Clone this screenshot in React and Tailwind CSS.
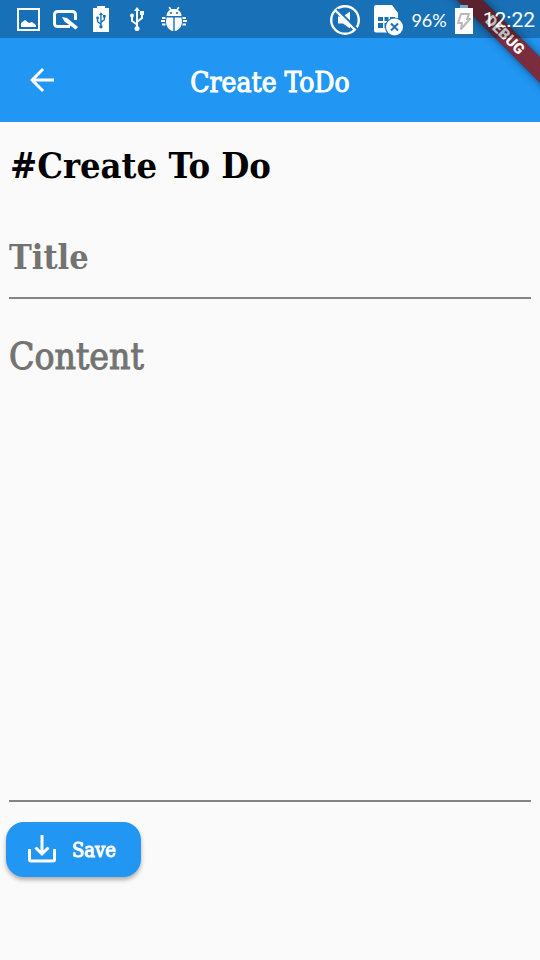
import React from 'react';

const slab = "font-['DejaVu_Serif_Condensed','DejaVu_Serif',serif]";

function PictureIcon() {
  return (
    <svg className="h-6 w-6" viewBox="0 0 24 24" fill="none" aria-hidden="true">
      <rect x="2" y="2" width="21" height="21" stroke="#fff" strokeWidth="2" />
      <path d="M5 20v-4l4-3 4 3 3-1 4 3v2z" fill="#fff" />
    </svg>
  );
}

function PenTabletIcon() {
  return (
    <svg className="h-6 w-7" viewBox="0 0 28 24" fill="none" aria-hidden="true">
      <path d="M23.500 13V7.500a3 3 0 0 0-3-3h-15a3 3 0 0 0-3 3v9a3 3 0 0 0 3 3H18" stroke="#fff" strokeWidth="3" />
      <path d="M10 10l5 1 11 9-2.500 2.500-11-8z" fill="#fff" />
    </svg>
  );
}

function UsbShape({ color }) {
  return (
    <g stroke={color} fill={color}>
      <path d="M8 4v17M8 18.500L3 15V9M8 16l5-4V7" fill="none" strokeWidth="2" />
      <path d="M5 5l3-4 3 4z" stroke="none" />
      <circle cx="8" cy="22.500" r="2.500" stroke="none" />
      <circle cx="3" cy="9.500" r="2" stroke="none" />
      <rect x="11" y="5" width="4" height="4" stroke="none" />
    </g>
  );
}

function UsbIcon() {
  return (
    <svg className="h-[26px] w-4" viewBox="0 0 16 26" aria-hidden="true">
      <UsbShape color="#fff" />
    </svg>
  );
}

function UsbBatteryIcon() {
  return (
    <svg className="h-[26px] w-4" viewBox="0 0 16 26" aria-hidden="true">
      <path d="M4 0h8v2h4v24H0V2h4z" fill="#fff" />
      <g transform="translate(2.5 5.5) scale(.68)">
        <UsbShape color="#1970b6" />
      </g>
    </svg>
  );
}

function BugIcon() {
  return (
    <svg className="h-[26px] w-[26px]" viewBox="0 0 26 26" fill="#fff" aria-hidden="true">
      <path d="M5.500 10c0-3 1.500-5 3.500-6L7.500 1.500 9 .8l1.500 2.500c1.500-.4 3.500-.4 5 0L17 .8l1.500.7L17 4c2 1 3.500 3 3.500 6z" />
      <path d="M5.500 11.500h6.800v13.500C8 24.500 5 20.500 5 15.500zM13.700 11.500h6.800l.5 4c0 5-3 9-7.300 9.500z" />
      <path d="M1 12h3.500M0 15h4M1 18.500h3.500M21.500 12H25M22 15h4M21.500 18.500H25" stroke="#fff" strokeWidth="2" />
      <circle cx="10" cy="7" r="1.100" fill="#1970b6" />
      <circle cx="16" cy="7" r="1.100" fill="#1970b6" />
    </svg>
  );
}

function MuteIcon() {
  return (
    <svg className="h-[30px] w-[30px]" viewBox="0 0 30 30" fill="none" aria-hidden="true">
      <circle cx="15" cy="15" r="13.800" stroke="#fff" strokeWidth="2.400" />
      <path d="M8 11.500h5l7-5v17l-7-5H8z" fill="#fff" />
      <path d="M7 4l20 20" stroke="#1970b6" strokeWidth="2" />
      <path d="M5.500 5.500l19.500 19.500" stroke="#fff" strokeWidth="2.400" />
    </svg>
  );
}

function SimIcon() {
  return (
    <svg className="h-8 w-[30px]" viewBox="0 0 30 32" fill="none" aria-hidden="true">
      <path d="M2 0h16l6 8v19.500H2a2 2 0 0 1-2-2V2a2 2 0 0 1 2-2z" fill="#fff" />
      <path d="M4 12h5v4H4zM10.500 12h4v4h-4zM16 12h5v4h-5zM4 18h5v5H4zM10.500 18h4v5h-4z" fill="#1970b6" />
      <circle cx="20.500" cy="22" r="9.500" fill="#1970b6" />
      <circle cx="20.500" cy="22" r="8.500" fill="#fff" />
      <path d="M17 18.500l7 7M24 18.500l-7 7" stroke="#1970b6" strokeWidth="2" />
    </svg>
  );
}

function ChargingIcon() {
  return (
    <svg className="h-[30px] w-[18px]" viewBox="0 0 18 30" fill="none" aria-hidden="true">
      <path d="M5 0h8v3H5z" fill="#75a9d3" />
      <path d="M0 3h18v26H0z" fill="#fff" />
      <path d="M6 9h8l-2 5h3L6 24l1-6H3z" stroke="#b9b9b9" strokeWidth="2" strokeLinejoin="round" />
    </svg>
  );
}

function StatusBar() {
  return (
    <div className="relative z-20 flex h-[38px] items-center justify-between bg-black/25 pl-4 pr-[5px] text-white">
      <div className="flex items-center">
        <PictureIcon />
        <span className="ml-3 flex"><PenTabletIcon /></span>
        <span className="ml-[13px] flex"><UsbBatteryIcon /></span>
        <span className="ml-5 flex"><UsbIcon /></span>
        <span className="ml-4 flex"><BugIcon /></span>
      </div>
      <div className="flex items-center font-[Lato,sans-serif]">
        <span className="flex pt-px"><MuteIcon /></span>
        <span className="ml-[14px] flex pt-1"><SimIcon /></span>
        <span className="ml-[7px] pt-[2px] text-lg leading-6">96%</span>
        <span className="ml-2 flex pt-px"><ChargingIcon /></span>
        <span className="ml-[10px] pt-[2px] font-[Roboto,sans-serif] text-[21px] leading-7">12:22</span>
      </div>
    </div>
  );
}

function DebugBanner() {
  return (
    <div className="pointer-events-none absolute top-0 right-0 z-10 h-28 w-28 overflow-hidden">
      <div className="absolute top-[26px] -right-[45px] w-40 rotate-45 bg-black/50 shadow-[0_0_9px_rgba(0,0,0,0.5)]">
        <div className="h-[18px] bg-[#b71c1c]/63 text-center font-[Roboto,sans-serif] text-[15px] leading-[18px] font-black text-white">
          DEBUG
        </div>
      </div>
    </div>
  );
}

export default function App() {
  return (
    <div className={`relative min-h-screen bg-[#fafafa] ${slab}`}>
      <header className="bg-[#2196f3] text-white">
        <StatusBar />
        <div className="grid h-[84px] grid-cols-[84px_1fr_84px] items-center">
          <button type="button" aria-label="Back" className="flex h-full items-center justify-center">
            <svg className="h-9 w-9" viewBox="0 0 24 24" fill="#fff" aria-hidden="true">
              <path d="M20 11H7.830l5.590-5.590L12 4l-8 8 8 8 1.410-1.410L7.830 13H20z" />
            </svg>
          </button>
          <div className="pt-[6px] text-center text-[28px] leading-9 [-webkit-text-stroke:1px_#fff]">Create ToDo</div>
        </div>
      </header>
      <DebugBanner />

      <main>
        <h1 className="px-[10px] pt-[19px] text-[36px] leading-[48px] font-bold text-black">#Create To Do</h1>
        <form className="flex flex-col items-start" onSubmit={(e) => e.preventDefault()}>
          <div className="w-full px-[9px]">
            <input
              type="text"
              aria-label="Title"
              placeholder="Title"
              className="mt-9 block h-[74px] w-full border-b-2 border-[#848484] bg-transparent pb-2 text-[34px] font-bold text-black outline-none placeholder:text-[#737373] placeholder:opacity-100"
            />
            <textarea
              aria-label="Content"
              placeholder="Content"
              className="mt-[34px] block h-[469px] w-full resize-none border-b-2 border-[#848484] bg-transparent text-[37px] leading-[48px] text-black outline-none placeholder:text-[#737373] placeholder:opacity-100 placeholder:[-webkit-text-stroke:1px_#737373]"
            />
          </div>
          <button
            type="submit"
            className="mt-5 ml-[6px] flex h-[55px] items-center gap-3 rounded-[18px] bg-[#2196f3] pr-[25px] pl-[18px] text-xl text-white shadow-[0_3px_4px_rgba(0,0,0,0.3)]"
          >
            <svg className="h-9 w-9" viewBox="0 0 36 36" fill="none" stroke="#fff" strokeWidth="3" aria-hidden="true">
              <path d="M18 3v18M11.500 15.500l6.500 6.500 6.500-6.500" />
              <path d="M5.500 17v10.500a1.500 1.500 0 0 0 1.500 1.500h22a1.500 1.500 0 0 0 1.500-1.500V17" />
            </svg>
            <span className="[-webkit-text-stroke:1px_#fff]">Save</span>
          </button>
        </form>
      </main>
    </div>
  );
}
